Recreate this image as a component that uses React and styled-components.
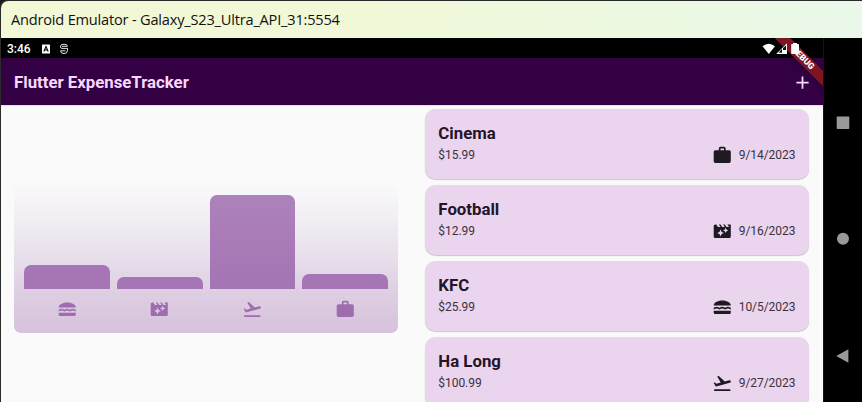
import React from "react";
import styled, { createGlobalStyle } from "styled-components";
import {
  MdAdd,
  MdFlightTakeoff,
  MdLunchDining,
  MdMovieFilter,
  MdWork,
} from "react-icons/md";

const GlobalStyle = createGlobalStyle`
  * { box-sizing: border-box; }
  body { margin: 0; background: #1c1c1c; overflow: hidden; }
`;

const Window = styled.div`
  width: 862px;
  height: 402px;
  display: flex;
  flex-direction: column;
  border-left: 1px solid #2b2b2b;
  border-top: 1px solid #2b2b2b;
  border-top-left-radius: 8px;
  overflow: hidden;
  background: #000;
`;

const TitleBar = styled.header`
  flex: 0 0 37px;
  display: flex;
  align-items: center;
  padding: 0 0 2px 10px;
  background: linear-gradient(90deg, #f3f8d6 0%, #f0f8d8 45%, #e9f8e9 100%);
  color: #111;
  font: 14.6px/20px "Open Sans", sans-serif;
  letter-spacing: -0.2px;
  white-space: nowrap;
`;

const Device = styled.div`
  flex: 1;
  display: flex;
  min-height: 0;
`;

const Screen = styled.div`
  position: relative;
  flex: 0 0 822px;
  display: flex;
  flex-direction: column;
  overflow: hidden;
  background: #fafafa;
  font-family: Roboto, sans-serif;
`;

const StatusBar = styled.div`
  flex: 0 0 20px;
  display: flex;
  align-items: center;
  padding: 1px 21px 0 6px;
  background: #000;
  color: #fff;
`;

const Clock = styled.span`
  width: 34px;
  font-size: 12px;
  font-weight: 500;
  line-height: 18px;
`;

const Notifications = styled.div`
  flex: 1;
  display: flex;
  align-items: center;
  gap: 8px;
`;

const Signals = styled.div`
  position: relative;
  z-index: 2;
  display: flex;
  align-items: center;
`;

const AppBar = styled.div`
  flex: 0 0 47px;
  display: flex;
  align-items: center;
  justify-content: space-between;
  padding: 1px 10px 0 13px;
  background: #330044;
  color: #f9d8ff;
`;

const AppTitle = styled.h1`
  margin: 0;
  font-size: 16.8px;
  font-weight: 700;
  line-height: 24px;
`;

const RibbonArea = styled.div`
  position: absolute;
  z-index: 1;
  top: 0;
  right: 0;
  width: 60px;
  height: 60px;
  overflow: hidden;
  pointer-events: none;
`;

const Ribbon = styled.div`
  position: absolute;
  left: -10.5px;
  top: 15px;
  width: 100px;
  height: 10.6px;
  transform: rotate(45deg);
  background: #7d1522;
  box-shadow: 0 0 5px rgba(0, 0, 0, 0.4);
  color: #fff;
  font-size: 8.7px;
  font-weight: 900;
  line-height: 10.6px;
  text-align: center;
`;

const Content = styled.main`
  flex: 1;
  min-height: 0;
  display: flex;
  border-top: 1px solid #eadcf0;
`;

const Half = styled.section`
  flex: 1;
  min-width: 0;
`;

const ChartHalf = styled(Half)`
  padding: 76px 13.5px 0 13px;
`;

const ListHalf = styled(Half)`
  padding: 2.6px 14px 0 13px;
  display: flex;
  flex-direction: column;
  gap: 6.2px;
`;

const Chart = styled.div`
  height: 151px;
  padding: 13.2px 10px 0;
  display: flex;
  flex-direction: column;
  border-radius: 7px;
  background: linear-gradient(
    180deg,
    rgba(215, 195, 221, 0) 0%,
    #f1edf3 25%,
    #e8dfeb 50%,
    #decfe3 72%,
    #d6c2dc 100%
  );
`;

const Bars = styled.div`
  height: 94px;
  display: grid;
  grid-template-columns: repeat(4, 1fr);
  column-gap: 7px;
  align-items: end;
`;

const Bar = styled.div`
  height: ${(p) => p.$height}px;
  border-radius: 7px 7px 0 0;
  background: ${(p) =>
    p.$height > 50 ? "linear-gradient(#ad82ba, #a474b4)" : "#a575b5"};
`;

const BarLabels = styled.div`
  display: grid;
  grid-template-columns: repeat(4, 1fr);
  column-gap: 7px;
  margin-top: 10px;
  justify-items: center;
  color: #9f6cb0;
`;

const Card = styled.article`
  flex: 0 0 70px;
  padding: 13px 13.6px 0;
  border-radius: 10.5px;
  background: #ebd4ed;
  box-shadow: 0 1px 1px rgba(0, 0, 0, 0.2), 0 0 1px rgba(0, 0, 0, 0.06);
`;

const CardTitle = styled.h2`
  margin: 0;
  color: #231529;
  font-size: 16.8px;
  font-weight: 700;
  line-height: 22px;
`;

const CardRow = styled.div`
  display: flex;
  align-items: center;
  height: 21px;
  margin-top: 0.8px;
  color: #3a3240;
  font-size: 12px;
  line-height: 20px;
  letter-spacing: -0.05px;
`;

const Amount = styled.span`
  flex: 1;
`;

const CategoryIcon = styled.span`
  display: flex;
  margin-right: 6.5px;
  color: #1d1a21;
`;

const NavBar = styled.nav`
  flex: 1;
  display: flex;
  flex-direction: column;
  align-items: center;
  padding: 77.5px 1px 0 0;
  background: #000;
  border-left: 1px solid #151515;
`;

const NavButton = styled.svg`
  display: block;
  flex: none;
  width: 14px;
  height: 14px;
  margin-bottom: 102.5px;
  fill: #999;
`;

const expenses = [
  { title: "Cinema", amount: "$15.99", date: "9/14/2023", Icon: MdWork },
  { title: "Football", amount: "$12.99", date: "9/16/2023", Icon: MdMovieFilter },
  { title: "KFC", amount: "$25.99", date: "10/5/2023", Icon: MdLunchDining },
  { title: "Ha Long", amount: "$100.99", date: "9/27/2023", Icon: MdFlightTakeoff },
];

const buckets = [
  { height: 24.5, Icon: MdLunchDining },
  { height: 12.5, Icon: MdMovieFilter },
  { height: 94, Icon: MdFlightTakeoff },
  { height: 15, Icon: MdWork },
];

function StatusIcons() {
  return (
    <Signals>
      <svg width="40" height="14" viewBox="0 0 40 14">
        <path d="M0.5 4.2Q6.7 -0.8 13 4.2L6.8 12Z" fill="#fff" />
        <path d="M25 1.2V12H14.2Z" fill="#fff" />
        <path d="M20 6.8V10.8H16.6Z" fill="#111" />
        <path d="M21 5.9L24 3.4V8H21Z" fill="#111" />
        <path
          d="M31 2V1H35V2H36.2Q37 2 37 2.8V11.3Q37 12 36.2 12H30Q29.2 12 29.2 11.3V2.8Q29.2 2 30 2Z"
          fill="#fff"
        />
      </svg>
    </Signals>
  );
}

function NotificationIcons() {
  return (
    <Notifications>
      <svg width="10" height="10" viewBox="0 0 10 10">
        <rect x="1" y="0.5" width="8" height="9" rx="0.6" fill="#fff" />
        <path d="M2.8 7.5L5 2.6L7.2 7.5M3.8 6H6.2" fill="none" stroke="#000" strokeWidth="1.1" />
      </svg>
      <svg width="10" height="12" viewBox="0 0 10 12" fill="none" stroke="#e6e6e6" strokeWidth="1">
        <path d="M8.5 3.2Q8.3 1.2 5 1.2Q1.5 1.2 1.5 3.2V4Q1.5 5.4 3 5.4H8.5V7.5Q8.3 10.6 5 10.6Q1.8 10.6 1.5 7.8H6.5" />
        <path d="M3 3.3H8.5" />
      </svg>
    </Notifications>
  );
}

export default function App() {
  return (
    <>
      <GlobalStyle />
      <Window>
        <TitleBar>Android Emulator - Galaxy_S23_Ultra_API_31:5554</TitleBar>
        <Device>
          <Screen>
            <StatusBar>
              <Clock>3:46</Clock>
              <NotificationIcons />
              <StatusIcons />
            </StatusBar>
            <AppBar>
              <AppTitle>Flutter ExpenseTracker</AppTitle>
              <MdAdd size={21} />
            </AppBar>
            <RibbonArea>
              <Ribbon>DEBUG</Ribbon>
            </RibbonArea>
            <Content>
              <ChartHalf>
                <Chart>
                  <Bars>
                    {buckets.map(({ height }, i) => (
                      <Bar key={i} $height={height} />
                    ))}
                  </Bars>
                  <BarLabels>
                    {buckets.map(({ Icon }, i) => (
                      <Icon key={i} size={20.5} />
                    ))}
                  </BarLabels>
                </Chart>
              </ChartHalf>
              <ListHalf>
                {expenses.map(({ title, amount, date, Icon }) => (
                  <Card key={title}>
                    <CardTitle>{title}</CardTitle>
                    <CardRow>
                      <Amount>{amount}</Amount>
                      <CategoryIcon>
                        <Icon size={20.5} />
                      </CategoryIcon>
                      <span>{date}</span>
                    </CardRow>
                  </Card>
                ))}
              </ListHalf>
            </Content>
          </Screen>
          <NavBar>
            <NavButton viewBox="0 0 14 14">
              <rect x="0.7" y="0.5" width="12.6" height="12.6" rx="0.8" />
            </NavButton>
            <NavButton viewBox="0 0 14 14">
              <circle cx="7" cy="6.8" r="6" />
            </NavButton>
            <NavButton viewBox="0 0 14 14">
              <path d="M0.3 7L12.4 0.2V13.8Z" />
            </NavButton>
          </NavBar>
        </Device>
      </Window>
    </>
  );
}
